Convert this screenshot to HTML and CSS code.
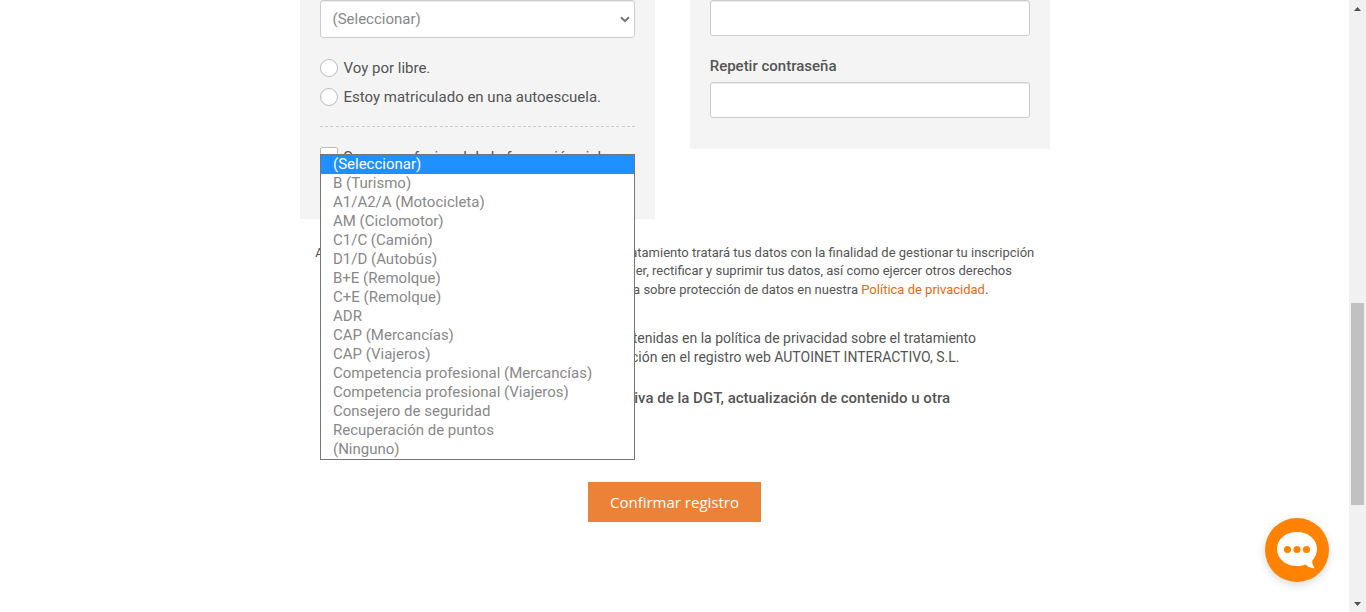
FILE: index.html
```html
<!DOCTYPE html>
<html lang="es">
<head>
<meta charset="utf-8">
<title>Registro</title>
<link rel="stylesheet" href="styles.css">
</head>
<body>
<div class="window">
  <main class="page">
    <div class="columns">
      <section class="panel panel-course">
        <div class="select">
          <span>(Seleccionar)</span>
          <svg class="chevron" width="10" height="7" viewBox="0 0 10 7"><path d="M1 1.200 5 5.200 9 1.200" fill="none" stroke="#777" stroke-width="2"/></svg>
          <ul class="options">
            <li class="active">(Seleccionar)</li>
            <li>B (Turismo)</li>
            <li>A1/A2/A (Motocicleta)</li>
            <li>AM (Ciclomotor)</li>
            <li>C1/C (Camión)</li>
            <li>D1/D (Autobús)</li>
            <li>B+E (Remolque)</li>
            <li>C+E (Remolque)</li>
            <li>ADR</li>
            <li>CAP (Mercancías)</li>
            <li>CAP (Viajeros)</li>
            <li>Competencia profesional (Mercancías)</li>
            <li>Competencia profesional (Viajeros)</li>
            <li>Consejero de seguridad</li>
            <li>Recuperación de puntos</li>
            <li>(Ninguno)</li>
          </ul>
        </div>
        <div class="choice first"><i class="radio"></i><span>Voy por libre.</span></div>
        <div class="choice"><i class="radio"></i><span>Estoy matriculado en una autoescuela.</span></div>
        <div class="divider"></div>
        <div class="choice teacher"><i class="checkbox"></i><span>Soy un profesional de la formación vial.</span></div>
      </section>
      <section class="panel panel-access">
        <div class="field"></div>
        <div class="label">Repetir contraseña</div>
        <div class="field"></div>
      </section>
    </div>
    <div class="legal">
      <div class="line l1"><span>A</span><span>tratamiento tratará tus datos con la finalidad de gestionar tu inscripción</span></div>
      <div class="line l2">acceder, rectificar y suprimir tus datos, así como ejercer otros derechos</div>
      <div class="line l3">a sobre protección de datos en nuestra <a class="link">Política de privacidad</a>.</div>
    </div>
    <div class="consent">
      <div class="line c1">contenidas en la política de privacidad sobre el tratamiento</div>
      <div class="line c2">inscripción en el registro web AUTOINET INTERACTIVO, S.L.</div>
    </div>
    <div class="line news">normativa de la DGT, actualización de contenido u otra</div>
    <button class="submit">Confirmar registro</button>
  </main>
  <aside class="scrollbar">
    <i class="arrow up"></i>
    <i class="thumb"></i>
    <i class="arrow down"></i>
  </aside>
  <div class="chat">
    <svg width="64" height="64" viewBox="0 0 64 64">
      <path fill="#fff" d="M32 14C20.500 14 12 21.500 12 31C12 40.500 20.500 48 32 48C35 48 38 47.500 40.500 46.500C43 49 46 50.200 49.700 50.200C48 48 47 45.500 47.300 42.500C50.300 39.500 52 35.500 52 31C52 21.500 43.500 14 32 14Z"/>
      <g fill="#ff8300"><circle cx="22.500" cy="31.500" r="3.600"/><circle cx="32" cy="31.500" r="3.600"/><circle cx="41.500" cy="31.500" r="3.600"/></g>
    </svg>
  </div>
</div>
</body>
</html>
```
FILE: styles.css
```css
* { box-sizing: border-box; }
body { margin: 0; background: #fff; color: #555; font: 15px/20px Roboto, sans-serif; overflow: hidden; }
.window { display: flex; height: 612px; }
.page { flex: 1; display: flex; flex-direction: column; padding-left: 300px; }
.columns { display: flex; align-items: flex-start; gap: 35px; height: 219px; }
.panel { background: #f4f4f4; padding: 0 20px; }
.panel-course { width: 355px; height: 219px; }
.panel-access { width: 360px; height: 149px; padding-left: 19.700px; }
.select { position: relative; display: flex; align-items: center; justify-content: space-between; height: 38px; padding: 0 4px 0 11.500px; background: #fff; border: 1px solid #ccc; border-radius: 3px; box-shadow: inset 0 1px 1px rgba(0,0,0,.075); color: #888; }
.options { position: absolute; z-index: 2; left: -1px; top: 153px; width: 315px; height: 306px; margin: 0; padding: 0; list-style: none; background: #fff; border: 1px solid #767676; line-height: 19px; }
.options li { height: 19px; padding-left: 12px; }
.options .active { background: #1e90ff; color: #fff; }
.choice { display: flex; align-items: center; gap: 5.500px; height: 29px; white-space: nowrap; }
.first { margin-top: 15px; }
.teacher span { padding-top: 3px; }
.radio, .checkbox { width: 18px; height: 18px; background: #fff; border: 1px solid #bbb; }
.radio { border-radius: 50%; }
.checkbox { border-radius: 2px; }
.divider { height: 1px; margin: 15px 0 14px; background: repeating-linear-gradient(90deg, #ccc 0 3px, transparent 3px 5.200px); }
.field { height: 36px; background: #fff; border: 1px solid #ccc; border-radius: 3px; box-shadow: inset 0 1px 1px rgba(0,0,0,.075); }
.label { margin: 20px 0 6px; font-weight: 500; }
.line { display: flex; justify-content: flex-end; white-space: pre; }
.legal { margin-top: 24.500px; font-size: 13px; line-height: 18.570px; }
.l1 { justify-content: space-between; width: 719px; margin-left: 15.300px; }
.l2 { width: 712px; }
.l3 { width: 688.400px; }
.link { color: #eb690b; }
.consent { margin-top: 29.500px; font-size: 14px; line-height: 19px; }
.c1 { width: 676px; }
.c2 { width: 659.500px; }
.news { width: 650px; margin-top: 21px; font-weight: 500; }
.submit { width: 173px; height: 40px; margin: 74px 0 0 288px; padding: 0; border: 0; background: #eb8237; color: #fff; font: 15px "Open Sans", sans-serif; }
.scrollbar { display: flex; flex-direction: column; align-items: center; width: 17px; background: #f1f1f1; padding: 7px 0 6px; }
.arrow { width: 7px; height: 4px; background: #505050; }
.up { clip-path: polygon(50% 0, 100% 100%, 0 100%); }
.down { clip-path: polygon(0 0, 100% 0, 50% 100%); margin-top: auto; }
.thumb { width: 13px; height: 202px; margin-top: 292px; background: #c1c1c1; }
.chat { position: absolute; left: 1265px; top: 518px; width: 64px; height: 64px; border-radius: 50%; background: #ff8300; box-shadow: 0 3px 8px rgba(0,0,0,.15); }
```
